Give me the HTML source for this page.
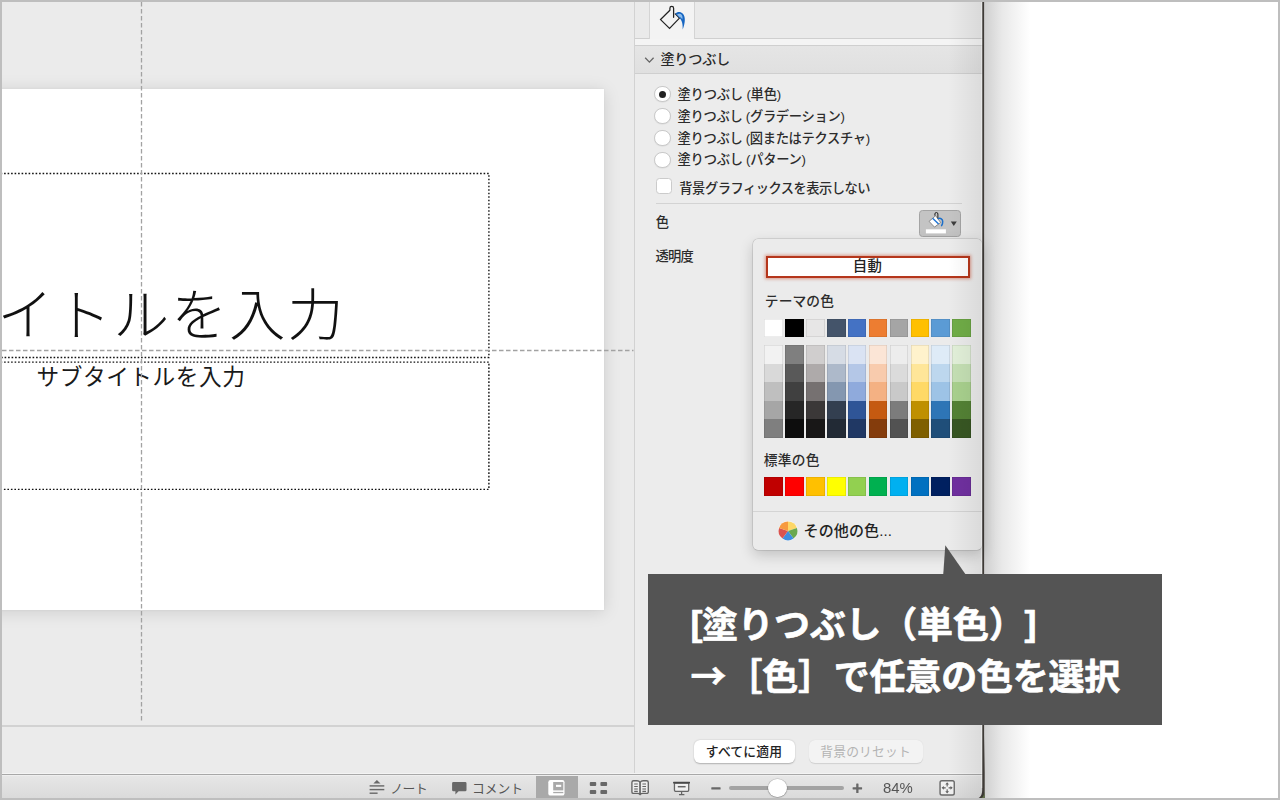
<!DOCTYPE html>
<html lang="ja">
<head>
<meta charset="utf-8">
<title>PowerPoint 背景の書式設定 - 塗りつぶし</title>
<style>
html,body{margin:0;padding:0}
body{width:1280px;height:800px;overflow:hidden;position:relative;background:#fff;font-family:"Liberation Sans",sans-serif}
div,svg.t{position:absolute;box-sizing:border-box}
svg.t{overflow:visible}
svg.t text{font-family:"Liberation Sans","Noto Sans CJK JP",sans-serif;white-space:pre}
#work{left:0;top:0;width:634px;height:775px;background:#ebebeb}
#slide{left:-30px;top:89px;width:634.3px;height:521.4px;background:#fff;box-shadow:0 2px 16px rgba(0,0,0,.13),0 0 2px rgba(0,0,0,.06)}
#notesline{left:0;top:725px;width:634px;height:2px;background:#d2d2d2}
#pane{left:633.7px;top:0;width:349.3px;height:775px;background:#ececec;border-left:1.6px solid #d2d2d2}
#tabrow{left:0;top:0;width:348px;height:38.6px;background:#eaeaea;border-bottom:1px solid #cfcfcf}
#tabstrip{left:0;top:38.6px;width:348px;height:7.1px;background:#f4f4f4;border-bottom:1px solid #cfcfcf}
#tab{left:14.3px;top:0;width:46px;height:39.2px;background:#f3f3f3;border-left:1px solid #d4d4d4;border-right:1px solid #d4d4d4}
#sechead{left:0;top:45.7px;width:348px;height:28.7px;background:linear-gradient(#e5e5e5,#e0e0e0);border-bottom:1.5px solid #cfcfcf}
.radio{width:16.2px;height:16.2px;margin:-.3px;border-radius:50%;background:#fff;border:1px solid #c9c9c9;box-shadow:0 .5px 1px rgba(0,0,0,.08)}
.radio.on::after{content:"";position:absolute;left:3.5px;top:3.5px;width:7.2px;height:7.2px;border-radius:50%;background:#222}
#chk{left:655.6px;top:178.25px;width:16px;height:16px;border-radius:3.5px;background:#fff;border:1px solid #cbcbcb}
#sep1{left:655.6px;top:203px;width:306px;height:1px;background:#d3d3d3}
#colorbtn{left:919px;top:210px;width:42px;height:27.2px;border-radius:3.5px;background:#c4c4c4;border:1px solid #a4a4a4}
#btn1{left:693.8px;top:739.6px;width:101.6px;height:23.3px;border-radius:6px;background:#fff;box-shadow:0 .5px 1.5px rgba(0,0,0,.25)}
#btn2{left:809px;top:739.6px;width:113.7px;height:23.3px;border-radius:6px;background:#f3f3f3;box-shadow:0 .5px 1px rgba(0,0,0,.12)}
#status{left:0;top:774.4px;width:984px;height:25.6px;background:linear-gradient(#e7e7e7,#d9d9d9);border-top:1.4px solid #a8a8a8;box-shadow:inset 0 1px 0 #efefef,0 -1px 0 #f4f4f4}
#viewact{left:535.6px;top:776px;width:42.2px;height:22.5px;background:#a9a9a9}
#zoomtxt{left:883.4px;top:779.9px;font-size:14.9px;color:#555;line-height:16px;white-space:nowrap;will-change:transform}
#track{left:728.5px;top:786.2px;width:115.6px;height:4.2px;border-radius:2.1px;background:#a3a3a3}
#knob{left:768px;top:778.6px;width:18.9px;height:18.9px;border-radius:50%;background:#fff;box-shadow:0 .5px 1.5px rgba(0,0,0,.35),0 0 0 .5px rgba(0,0,0,.12)}
#wedge{display:none}
#paneshade{left:948px;top:2px;width:35px;height:796px;background:linear-gradient(90deg,rgba(0,0,0,0),rgba(0,0,0,.075))}
#wshadow{left:984px;top:0;width:46px;height:800px;background:linear-gradient(90deg,#cfcfcf,#e9e9e9 40%,#fff)}
#popup{left:752.75px;top:238.5px;width:228.8px;height:311.2px;border-radius:5px;background:#ebebeb;box-shadow:0 0 0 .5px rgba(0,0,0,.18),0 5px 14px rgba(0,0,0,.19)}
#auto{left:12.75px;top:17.4px;width:204.2px;height:22.4px;background:#fff;border:2px solid #b5361b;box-shadow:0 0 3px 1px rgba(200,70,40,.5)}
.sw{width:18.5px;height:18.5px;box-shadow:inset 0 0 0 .6px rgba(0,0,0,.14)}
.sh{width:18.5px;height:18.5px}
.shb{width:18.5px;height:92.5px;box-shadow:inset 0 0 0 .6px rgba(0,0,0,.14)}
#popsep{left:0;top:272.3px;width:229px;height:1px;background:#d4d4d4}
#callout{left:647.8px;top:573.6px;width:514.3px;height:151.4px;background:#545454}
#frame{left:0;top:0;width:1280px;height:800px;border:2px solid #bebebe;border-top-width:2.2px;pointer-events:none}

</style>
</head>
<body>
<div id="work"></div>
<div id="slide"></div>
<svg class="t" style="left:0;top:160px" width="500" height="340" viewBox="0 160 500 340">
<g fill="none" stroke="#111" stroke-width="1.4" stroke-dasharray="1.6 1.9">
<path d="M0.6 173.5H488.9V357.5H0"/>
<path d="M0.6 362.1H488.9V489.4H0"/>
</g></svg>
<svg class="t" style="left:1.75px;top:288.09px;" width="335.25" height="53.11" viewBox="0 0 335.25 53.11"><text x="-4.89" y="47.14" font-size="56" font-weight="300" letter-spacing="2.07" fill="#111">イトルを入力</text></svg>
<svg class="t" style="left:36.25px;top:363.85px;" width="208.15" height="24.70" viewBox="0 0 208.15 24.70"><text x="0.37" y="21.02" font-size="22.7" font-weight="400" letter-spacing="0.57" fill="#1a1a1a">サブタイトルを入力</text></svg>
<svg class="t" style="left:0;top:0" width="640" height="730" viewBox="0 0 640 730">
<g fill="none" stroke="#a2a2a2" stroke-width="1.3" stroke-dasharray="4.5 2.5">
<path d="M141.5 2V722.5"/>
<path d="M2 350.5H633.5"/>
</g></svg>
<div id="notesline"></div>
<div id="pane">
<div id="tabrow"></div><div id="tabstrip"></div><div id="tab"></div>
<div id="sechead"></div>
</div>
<svg class="t" style="left:658.50px;top:50.48px;" width="71.90" height="16.84" viewBox="0 0 71.90 16.84"><text x="1.49" y="13.98" font-size="14.2" font-weight="500" letter-spacing="-0.31" fill="#2a2a2a">塗りつぶし</text></svg>
<div class="radio on" style="left:654.7px;top:86.3px"></div>
<svg class="t" style="left:676.10px;top:85.54px;" width="106.90" height="17.93" viewBox="0 0 106.90 17.93"><text x="1.52" y="13.28" font-size="13.3" font-weight="500" letter-spacing="-0.23" fill="#2c2c2c">塗りつぶし (単色)</text></svg>
<div class="radio" style="left:654.7px;top:108.5px"></div>
<svg class="t" style="left:676.10px;top:107.61px;" width="170.90" height="18.08" viewBox="0 0 170.90 18.08"><text x="1.52" y="13.44" font-size="13.3" font-weight="500" letter-spacing="-0.32" fill="#2c2c2c">塗りつぶし (グラデーション)</text></svg>
<div class="radio" style="left:654.7px;top:130.3px"></div>
<svg class="t" style="left:676.10px;top:129.56px;" width="196.50" height="17.87" viewBox="0 0 196.50 17.87"><text x="1.52" y="13.23" font-size="13.3" font-weight="500" letter-spacing="-0.35" fill="#2c2c2c">塗りつぶし (図またはテクスチャ)</text></svg>
<div class="radio" style="left:654.7px;top:152.2px"></div>
<svg class="t" style="left:676.10px;top:151.46px;" width="132.40" height="17.87" viewBox="0 0 132.40 17.87"><text x="1.52" y="13.23" font-size="13.3" font-weight="500" letter-spacing="-0.28" fill="#2c2c2c">塗りつぶし (パターン)</text></svg>
<div id="chk"></div>
<svg class="t" style="left:677.75px;top:179.58px;" width="194.85" height="16.45" viewBox="0 0 194.85 16.45"><text x="1.30" y="13.32" font-size="13.3" font-weight="500" letter-spacing="-0.51" fill="#2c2c2c">背景グラフィックスを表示しない</text></svg>
<div id="sep1"></div>
<svg class="t" style="left:654.25px;top:214.12px;" width="16.41" height="16.26" viewBox="0 0 16.41 16.26"><text x="1.63" y="13.28" font-size="13.3" font-weight="500" fill="#2c2c2c">色</text></svg>
<svg class="t" style="left:654.00px;top:248.18px;" width="41.50" height="16.44" viewBox="0 0 41.50 16.44"><text x="1.57" y="13.23" font-size="13.3" font-weight="500" letter-spacing="-0.76" fill="#2c2c2c">透明度</text></svg>
<div id="colorbtn"></div>
<div id="btn1"></div><div id="btn2"></div>
<svg class="t" style="left:705.40px;top:743.02px;" width="79.20" height="15.96" viewBox="0 0 79.20 15.96"><text x="0.82" y="12.80" font-size="12.8" font-weight="500" letter-spacing="0.19" fill="#222">すべてに適用</text></svg>
<svg class="t" style="left:819.20px;top:743.10px;" width="91.90" height="15.80" viewBox="0 0 91.90 15.80"><text x="1.31" y="12.76" font-size="12.8" font-weight="400" letter-spacing="0.15" fill="#b4b4b4">背景のリセット</text></svg>
<div id="status"></div>
<div id="viewact"></div>
<svg class="t" style="left:389.60px;top:780.85px;" width="37.80" height="14.29" viewBox="0 0 37.80 14.29"><text x="0.21" y="11.91" font-size="12.8" font-weight="400" letter-spacing="-0.42" fill="#555">ノート</text></svg>
<svg class="t" style="left:471.60px;top:780.85px;" width="51.10" height="14.29" viewBox="0 0 51.10 14.29"><text x="-0.04" y="11.91" font-size="12.8" font-weight="400" letter-spacing="-0.04" fill="#555">コメント</text></svg>
<div id="zoomtxt">84%</div>
<div id="track"></div><div id="knob"></div>
<div id="wshadow"></div>
<svg class="t" style="left:970px;top:0" width="20" height="800" viewBox="970 0 20 800">
<path d="M982.2 0V789.5C982.2 794.5 980.6 798.2 976.6 798.6H984.7V772L984.1 735V0Z" fill="#3f3b37"/>
<path d="M984.6 790.5V798.6H979.8C983.2 797.6 984.6 794.6 984.6 790.5Z" fill="#5f7045"/>
</svg>
<div id="popup">
<div id="auto"></div>
<div class="sw" style="left:11.65px;top:80.1px;background:#FFFFFF"></div>
<div class="sw" style="left:32.52px;top:80.1px;background:#000000"></div>
<div class="sw" style="left:53.40px;top:80.1px;background:#E7E6E6"></div>
<div class="sw" style="left:74.27px;top:80.1px;background:#44546A"></div>
<div class="sw" style="left:95.15px;top:80.1px;background:#4472C4"></div>
<div class="sw" style="left:116.02px;top:80.1px;background:#ED7D31"></div>
<div class="sw" style="left:136.90px;top:80.1px;background:#A5A5A5"></div>
<div class="sw" style="left:157.77px;top:80.1px;background:#FFC000"></div>
<div class="sw" style="left:178.65px;top:80.1px;background:#5B9BD5"></div>
<div class="sw" style="left:199.52px;top:80.1px;background:#70AD47"></div>
<div class="sh" style="left:11.65px;top:106.7px;background:#F2F2F2"></div>
<div class="sh" style="left:11.65px;top:125.2px;background:#D9D9D9"></div>
<div class="sh" style="left:11.65px;top:143.7px;background:#BFBFBF"></div>
<div class="sh" style="left:11.65px;top:162.2px;background:#A6A6A6"></div>
<div class="sh" style="left:11.65px;top:180.7px;background:#7F7F7F"></div>
<div class="shb" style="left:11.65px;top:106.7px"></div>
<div class="sh" style="left:32.52px;top:106.7px;background:#7F7F7F"></div>
<div class="sh" style="left:32.52px;top:125.2px;background:#595959"></div>
<div class="sh" style="left:32.52px;top:143.7px;background:#404040"></div>
<div class="sh" style="left:32.52px;top:162.2px;background:#262626"></div>
<div class="sh" style="left:32.52px;top:180.7px;background:#0D0D0D"></div>
<div class="shb" style="left:32.52px;top:106.7px"></div>
<div class="sh" style="left:53.40px;top:106.7px;background:#D0CECE"></div>
<div class="sh" style="left:53.40px;top:125.2px;background:#AEAAAA"></div>
<div class="sh" style="left:53.40px;top:143.7px;background:#767171"></div>
<div class="sh" style="left:53.40px;top:162.2px;background:#3B3838"></div>
<div class="sh" style="left:53.40px;top:180.7px;background:#181717"></div>
<div class="shb" style="left:53.40px;top:106.7px"></div>
<div class="sh" style="left:74.27px;top:106.7px;background:#D6DCE5"></div>
<div class="sh" style="left:74.27px;top:125.2px;background:#ADB9CA"></div>
<div class="sh" style="left:74.27px;top:143.7px;background:#8497B0"></div>
<div class="sh" style="left:74.27px;top:162.2px;background:#333F50"></div>
<div class="sh" style="left:74.27px;top:180.7px;background:#222A35"></div>
<div class="shb" style="left:74.27px;top:106.7px"></div>
<div class="sh" style="left:95.15px;top:106.7px;background:#DAE3F3"></div>
<div class="sh" style="left:95.15px;top:125.2px;background:#B4C7E7"></div>
<div class="sh" style="left:95.15px;top:143.7px;background:#8FAADC"></div>
<div class="sh" style="left:95.15px;top:162.2px;background:#2F5597"></div>
<div class="sh" style="left:95.15px;top:180.7px;background:#203864"></div>
<div class="shb" style="left:95.15px;top:106.7px"></div>
<div class="sh" style="left:116.02px;top:106.7px;background:#FBE5D6"></div>
<div class="sh" style="left:116.02px;top:125.2px;background:#F8CBAD"></div>
<div class="sh" style="left:116.02px;top:143.7px;background:#F4B183"></div>
<div class="sh" style="left:116.02px;top:162.2px;background:#C55A11"></div>
<div class="sh" style="left:116.02px;top:180.7px;background:#843C0C"></div>
<div class="shb" style="left:116.02px;top:106.7px"></div>
<div class="sh" style="left:136.90px;top:106.7px;background:#EDEDED"></div>
<div class="sh" style="left:136.90px;top:125.2px;background:#DBDBDB"></div>
<div class="sh" style="left:136.90px;top:143.7px;background:#C9C9C9"></div>
<div class="sh" style="left:136.90px;top:162.2px;background:#7C7C7C"></div>
<div class="sh" style="left:136.90px;top:180.7px;background:#525252"></div>
<div class="shb" style="left:136.90px;top:106.7px"></div>
<div class="sh" style="left:157.77px;top:106.7px;background:#FFF2CC"></div>
<div class="sh" style="left:157.77px;top:125.2px;background:#FFE699"></div>
<div class="sh" style="left:157.77px;top:143.7px;background:#FFD966"></div>
<div class="sh" style="left:157.77px;top:162.2px;background:#BF9000"></div>
<div class="sh" style="left:157.77px;top:180.7px;background:#7F6000"></div>
<div class="shb" style="left:157.77px;top:106.7px"></div>
<div class="sh" style="left:178.65px;top:106.7px;background:#DEEBF7"></div>
<div class="sh" style="left:178.65px;top:125.2px;background:#BDD7EE"></div>
<div class="sh" style="left:178.65px;top:143.7px;background:#9DC3E6"></div>
<div class="sh" style="left:178.65px;top:162.2px;background:#2E75B6"></div>
<div class="sh" style="left:178.65px;top:180.7px;background:#1F4E79"></div>
<div class="shb" style="left:178.65px;top:106.7px"></div>
<div class="sh" style="left:199.52px;top:106.7px;background:#E2F0D9"></div>
<div class="sh" style="left:199.52px;top:125.2px;background:#C5E0B4"></div>
<div class="sh" style="left:199.52px;top:143.7px;background:#A9D18E"></div>
<div class="sh" style="left:199.52px;top:162.2px;background:#548235"></div>
<div class="sh" style="left:199.52px;top:180.7px;background:#385723"></div>
<div class="shb" style="left:199.52px;top:106.7px"></div>
<div class="sw" style="left:11.65px;top:238.6px;background:#C00000"></div>
<div class="sw" style="left:32.52px;top:238.6px;background:#FF0000"></div>
<div class="sw" style="left:53.40px;top:238.6px;background:#FFC000"></div>
<div class="sw" style="left:74.27px;top:238.6px;background:#FFFF00"></div>
<div class="sw" style="left:95.15px;top:238.6px;background:#92D050"></div>
<div class="sw" style="left:116.02px;top:238.6px;background:#00B050"></div>
<div class="sw" style="left:136.90px;top:238.6px;background:#00B0F0"></div>
<div class="sw" style="left:157.77px;top:238.6px;background:#0070C0"></div>
<div class="sw" style="left:178.65px;top:238.6px;background:#002060"></div>
<div class="sw" style="left:199.52px;top:238.6px;background:#7030A0"></div>
<div id="popsep"></div>
</div>
<svg class="t" style="left:853.00px;top:257.36px;" width="30.00" height="17.48" viewBox="0 0 30.00 17.48"><text x="-0.23" y="14.18" font-size="14.4" font-weight="500" letter-spacing="0.26" fill="#222">自動</text></svg>
<svg class="t" style="left:763.60px;top:292.41px;" width="71.50" height="16.68" viewBox="0 0 71.50 16.68"><text x="0.75" y="13.66" font-size="13.75" font-weight="500" letter-spacing="0.14" fill="#2c2c2c">テーマの色</text></svg>
<svg class="t" style="left:762.40px;top:450.93px;" width="59.00" height="16.84" viewBox="0 0 59.00 16.84"><text x="1.63" y="13.67" font-size="13.75" font-weight="500" letter-spacing="0.30" fill="#2c2c2c">標準の色</text></svg>
<svg class="t" style="left:803.00px;top:521.28px;" width="90.90" height="17.96" viewBox="0 0 90.90 17.96"><text x="0.56" y="14.72" font-size="15" font-weight="500" letter-spacing="0.14" fill="#222">その他の色...</text></svg>
<div id="paneshade"></div>
<svg class="t" style="left:978px;top:0" width="6" height="800" viewBox="978 0 6 800"><path d="M981.75 2V788" stroke="rgba(255,255,255,.5)" stroke-width=".9" fill="none"/></svg>
<div id="callout"></div>
<svg class="t" style="left:930px;top:540px" width="50" height="40" viewBox="930 540 50 40"><path d="M945.3 545.3L943.2 575H966Z" fill="#545454"/></svg>
<svg class="t" style="left:689.70px;top:604.65px;" width="12.24" height="39.10" viewBox="0 0 12.24 39.10"><text x="0.5" y="30.91" font-size="36" font-weight="700" fill="#fff" stroke="#fff" stroke-width="0.65" stroke-linejoin="round">[</text></svg>
<svg class="t" style="left:701.30px;top:604.94px;" width="301.65" height="38.56" viewBox="0 0 301.65 38.56"><text x="0.96" y="32.96" font-size="36" font-weight="700" letter-spacing="-0.18" fill="#fff" stroke="#fff" stroke-width="0.65" stroke-linejoin="round">塗りつぶし（単色）</text></svg>
<svg class="t" style="left:1023.75px;top:604.65px;" width="12.21" height="39.10" viewBox="0 0 12.21 39.10"><text x="0.5" y="30.91" font-size="36" font-weight="700" fill="#fff" stroke="#fff" stroke-width="0.65" stroke-linejoin="round">]</text></svg>
<svg class="t" style="left:690.10px;top:656.62px;" width="432.40" height="38.09" viewBox="0 0 432.40 38.09"><text x="0.56" y="32.78" font-size="36" font-weight="700" letter-spacing="-0.18" fill="#fff" stroke="#fff" stroke-width="0.65" stroke-linejoin="round" style="font-family:'Noto Sans CJK JP','Liberation Sans',sans-serif">→［色］で任意の色を選択</text></svg>
<div id="frame"></div>
<!-- tab: paint bucket -->
<svg class="t" style="left:655px;top:2px" width="36" height="32" viewBox="655 2 36 32" role="img" aria-label="塗りつぶし">
<path d="M669.9 10.3L660.55 19.6L669.55 28.4L679.5 18.1L675.3 13.9M669.9 10.3V8.2a1.85 1.85 0 0 1 3.7 0V17.3" fill="none" stroke="#222" stroke-width="1.25" stroke-linejoin="miter" stroke-linecap="round"/>
<path d="M675.3 13.6C677.2 11.6 680.6 11.4 682.9 13.7C685.6 16.6 685.4 22.6 682.7 29.4C682.8 24.6 682.3 20.6 679.5 18.1Z" fill="#1766c2"/>
<path d="M677 14.6C678.6 13.4 680.8 13.7 681.9 15.3C682.6 16.4 682.7 17.9 682.3 19.4C681.5 18 680.6 17.3 679.5 17Z" fill="#8dbdec"/>
</svg>
<!-- section chevron -->
<svg class="t" style="left:643px;top:54px" width="14" height="12" viewBox="643 54 14 12"><path d="M645.2 57.7L649.4 62.1L653.6 57.7" fill="none" stroke="#666" stroke-width="1.3"/></svg>
<!-- colour button icon -->
<svg class="t" style="left:920px;top:210px" width="42" height="28" viewBox="920 210 42 28" role="img" aria-label="塗りつぶしの色">
<path d="M935.6 215.7L929.1 221.4L934.5 227.1L940.6 222.5Z" fill="#fff" stroke="#666" stroke-width=".7" stroke-linejoin="round"/>
<path d="M932.6 218.3L938.6 224" stroke="#2277d6" stroke-width="1.5" fill="none"/>
<path d="M934.9 215.6V214a1.5 1.5 0 0 1 3 0V218.4" fill="none" stroke="#222" stroke-width="1"/>
<path d="M938.2 218.6C940.6 217.8 942.6 219.2 942.7 221.6C942.8 223 942.3 224.4 941.6 225.6" fill="none" stroke="#1b6fcb" stroke-width="1.5" stroke-linecap="round"/>
<rect x="925.9" y="229.3" width="20" height="4.1" fill="#fff"/>
<path d="M950.8 221.4H956.8L953.8 226Z" fill="#3c3c3c"/>
</svg>
<!-- colour wheel -->
<svg class="t" style="left:776.9px;top:519.6px" width="22" height="22" viewBox="-11 -11 22 22" role="img" aria-label="カラーホイール">
<circle r="9.9" fill="#f7f7f7"/>
<g stroke="none">
<path d="M0 0L0 -9.4A9.4 9.4 0 0 1 8.94 -2.9Z" fill="#fdd766"/>
<path d="M0 0L8.94 -2.9A9.4 9.4 0 0 1 5.53 7.6Z" fill="#6aa84f"/>
<path d="M0 0L5.53 7.6A9.4 9.4 0 0 1 -5.53 7.6Z" fill="#3d8de0"/>
<path d="M0 0L-5.53 7.6A9.4 9.4 0 0 1 -8.94 -2.9Z" fill="#d9534f"/>
<path d="M0 0L-8.94 -2.9A9.4 9.4 0 0 1 0 -9.4Z" fill="#f79a3e"/>
</g>
</svg>
<!-- status bar icons -->
<svg class="t" style="left:360px;top:776px" width="600" height="22" viewBox="360 776 600 22">
<g fill="#686868">
<!-- notes -->
<path d="M376.9 780L380.5 783.5H373.4Z"/>
<rect x="369.6" y="785.2" width="14.7" height="1.4"/><rect x="369.6" y="788.9" width="14.7" height="1.4"/><rect x="369.6" y="792.5" width="8" height="1.4"/>
<!-- comment -->
<path d="M453.4 781.9H465.2a1.3 1.3 0 0 1 1.3 1.3V789.9a1.3 1.3 0 0 1 -1.3 1.3H458.6L455.4 794.4V791.2H453.4a1.3 1.3 0 0 1 -1.3 -1.3V783.2a1.3 1.3 0 0 1 1.3 -1.3Z"/>
<!-- grid -->
<rect x="589.8" y="782" width="6.4" height="3.9" rx=".9"/><rect x="600.4" y="782" width="6.7" height="3.9" rx=".9"/>
<rect x="589.8" y="790" width="6.4" height="3.9" rx=".9"/><rect x="600.4" y="790" width="6.7" height="3.9" rx=".9"/>
<!-- minus / plus -->
<rect x="711.3" y="787.2" width="9.3" height="2.3" rx=".6"/>
<rect x="852.6" y="787.2" width="9.5" height="2.3" rx=".4"/><rect x="856.2" y="783.6" width="2.3" height="9.5" rx=".4"/>
</g>
<!-- normal view (white on active) -->
<rect x="548.3" y="780.1" width="16.2" height="15.5" rx="2.2" fill="#fff"/>
<rect x="553.2" y="782" width="10.1" height="8.4" fill="#a9a9a9"/>
<rect x="556" y="784.8" width="5.2" height="2.1" fill="#fff"/>
<rect x="553.2" y="791.9" width="10.1" height="1.3" fill="#a9a9a9"/>
<!-- reading view (book) -->
<g fill="rgba(255,255,255,.45)" stroke="#646464" stroke-width="1.35" stroke-linejoin="round">
<path d="M640.1 782.3C639.4 781.2 638.3 780.75 637 780.75H633.6a1.7 1.7 0 0 0 -1.7 1.7V791.9a1.5 1.5 0 0 0 1.5 1.5H637.6C638.7 793.4 639.6 793.8 640.1 794.5Z"/>
<path d="M640.1 782.3C640.8 781.2 641.9 780.75 643.2 780.75H646.6a1.7 1.7 0 0 1 1.7 1.7V791.9a1.5 1.5 0 0 1 -1.5 1.5H642.6C641.5 793.4 640.6 793.8 640.1 794.5Z"/>
</g>
<g stroke="#646464" stroke-width="1.1" fill="none">
<path d="M634.2 784H637.8M634.2 786.45H637.8M634.2 791.4H637.8M642.4 784H646M642.4 786.45H646M642.4 791.4H646"/>
<path d="M634.2 788.95H637.8M642.4 788.95H646" stroke-width="1.5" stroke="#8a8a8a"/>
</g>
<!-- slideshow -->
<path d="M674.45 783V790a1.4 1.4 0 0 0 1.4 1.4H687.3a1.4 1.4 0 0 0 1.4 -1.4V783Z" fill="rgba(255,255,255,.5)" stroke="#666" stroke-width="1.3"/>
<rect x="673.1" y="781.7" width="16.9" height="1.7" rx=".5" fill="#484848"/>
<g fill="none" stroke="#646464">
<path d="M677.8 786.7H685.6" stroke-width="1.5"/>
<path d="M681.6 791.6V794.4M679 794.7H684.4" stroke-width="1.2"/>
</g>
<!-- fit to window -->
<rect x="940.05" y="780.75" width="14.2" height="14.2" rx="1.8" fill="rgba(255,255,255,.5)" stroke="#6a6a6a" stroke-width="1.4"/>
<g fill="#606060">
<path d="M947.15 782.3L949 784.5H947.7V786.4H946.6V784.5H945.3Z"/>
<path d="M947.15 793.4L949 791.2H947.7V789.3H946.6V791.2H945.3Z"/>
<path d="M941.6 787.85L943.8 786V787.3H945.7V788.4H943.8V789.7Z"/>
<path d="M952.7 787.85L950.5 786V787.3H948.6V788.4H950.5V789.7Z"/>
</g>
</svg>

</body>
</html>
